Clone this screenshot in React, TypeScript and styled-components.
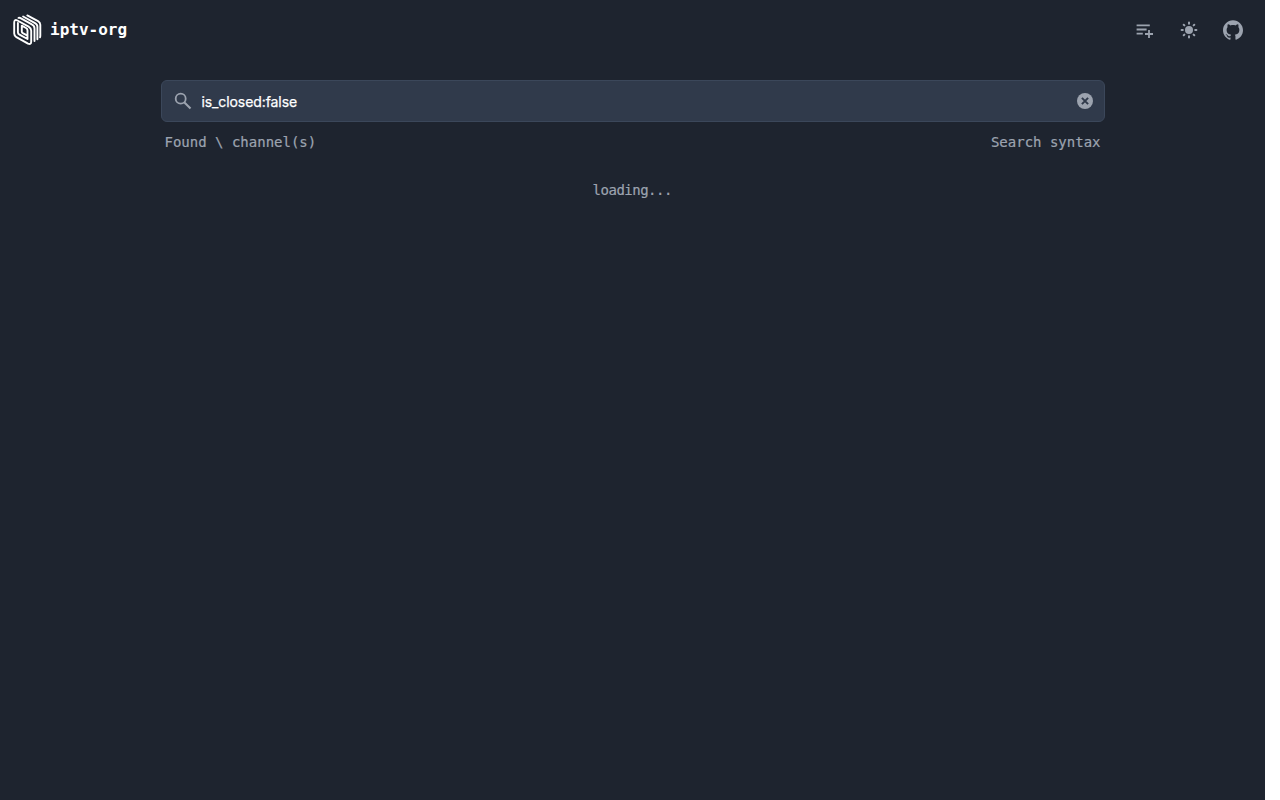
import React, { useState } from 'react';
import styled, { createGlobalStyle } from 'styled-components';

const GlobalStyle = createGlobalStyle`
  *, *::before, *::after { box-sizing: border-box; }
  html { background: #ffffff; }
  body { margin: 0; overflow: hidden; }
`;

const Page = styled.div`
  width: calc(100vw - 15px);
  min-height: 100vh;
  background: #1e242f;
  color: #9ca3af;
  font-family: 'DejaVu Sans Mono', monospace;
  font-size: 14px;
  line-height: 20px;
  -webkit-text-stroke: 0.2px currentColor;
`;

const NavBar = styled.header`
  display: flex;
  align-items: center;
  justify-content: space-between;
  height: 60px;
  padding: 0 12px;
`;

const Brand = styled.a`
  display: flex;
  align-items: center;
  gap: 8px;
  color: #ffffff;
  font-size: 16px;
  font-weight: 700;
  line-height: 24px;
  -webkit-text-stroke: 0;
`;

const Logo = styled.svg`
  width: 30px;
  height: 32px;
  fill: none;
  stroke: currentColor;
  stroke-width: 1.9;
  stroke-linecap: round;
  stroke-linejoin: round;
`;

const Actions = styled.nav`
  display: flex;
  gap: 4px;
`;

const IconButton = styled.button`
  display: flex;
  align-items: center;
  justify-content: center;
  width: 40px;
  height: 40px;
  padding: 0;
  border: 0;
  background: transparent;
  color: inherit;
`;

const Icon = styled.svg`
  flex: none;
  width: 20px;
  height: 20px;
  fill: currentColor;
`;

const LineIcon = styled(Icon)`
  fill: none;
  stroke: currentColor;
  stroke-width: 1.8;
`;

const Content = styled.main`
  width: 944px;
  margin: 0 160px 0 161px;
  padding-top: 20px;
`;

const SearchBox = styled.label`
  display: flex;
  align-items: center;
  height: 42px;
  padding: 0 9px 0 11px;
  border: 1px solid #3b475a;
  border-radius: 6px;
  background: #303a4b;
`;

const SearchInput = styled.input`
  flex: 1;
  min-width: 0;
  height: 40px;
  margin: 1px 0 0 8.4px;
  padding: 0;
  border: 0;
  outline: 0;
  background: transparent;
  color: #ffffff;
  font: 400 14px/20px Inter, 'Liberation Sans', sans-serif;
  letter-spacing: -0.08px;
  -webkit-text-stroke: 0.25px currentColor;
`;

const ClearButton = styled(IconButton)`
  width: 20px;
  height: 20px;
`;

const Summary = styled.div`
  display: flex;
  justify-content: space-between;
  padding: 10px 4.5px 0 3.5px;
`;

const Loading = styled.div`
  padding: 28px 1.5px 0 0;
  letter-spacing: -0.5px;
  text-align: center;
`;

export default function App() {
  const [query, setQuery] = useState('is_closed:false');

  return (
    <>
      <GlobalStyle />
      <Page>
        <NavBar>
          <Brand>
            <Logo viewBox="0 0 30 32">
              <path d="M2.2 8.7Q2.2 5 5.4 6.5L16.6 12.6Q19.2 14.2 19.2 16.8V27.5Q19.2 31 16 29.6L4.4 23.2Q2.2 21.8 2.2 19.5Z" />
              <path d="M5.9 9V18.2Q5.9 19.8 7.5 20.7L15.5 25V16.5Q15.5 14.8 14 14L9.8 11.7V17.4Q9.8 18.6 10.8 19.2L15 21.4" />
              <path d="M6.5 3.9Q7.7 3.6 9 4.3L19.8 10.4Q22.5 11.8 22.5 14.4V27" />
              <path d="M11.1 2.5L22.6 8.8Q25.4 10.3 25.4 12.6V25.3" />
              <path d="M15.3 1.4L26 7.1Q28.3 8.5 28.3 10.8V21.5Q28.3 22.8 28 23.3" />
            </Logo>
            iptv-org
          </Brand>
          <Actions>
            <IconButton aria-label="Create playlist">
              <LineIcon viewBox="0 0 20 20">
                <path d="M1.6 5.4H14.8M1.6 9.5H11.6M1.6 13.6H7.8M10 14H18M14 10V18" />
              </LineIcon>
            </IconButton>
            <IconButton aria-label="Toggle theme">
              <Icon viewBox="0 0 20 20">
                <circle cx="10" cy="10" r="4" />
                <path
                  d="M10 2.6V3.8M10 16.2V17.4M2.6 10H3.8M16.2 10H17.4M4.7 4.7L5.4 5.4M14.6 14.6L15.3 15.3M4.7 15.3L5.4 14.6M14.6 5.4L15.3 4.7"
                  stroke="currentColor"
                  strokeWidth="2"
                  strokeLinecap="round"
                />
              </Icon>
            </IconButton>
            <IconButton aria-label="GitHub">
              <Icon viewBox="0 0 24 24">
                <path d="M12 .297c-6.63 0-12 5.373-12 12 0 5.303 3.438 9.8 8.205 11.385.6.113.82-.258.82-.577 0-.285-.01-1.04-.015-2.04-3.338.724-4.042-1.61-4.042-1.61C4.422 18.07 3.633 17.7 3.633 17.7c-1.087-.744.084-.729.084-.729 1.205.084 1.838 1.236 1.838 1.236 1.07 1.835 2.809 1.305 3.495.998.108-.776.417-1.305.76-1.605-2.665-.3-5.466-1.332-5.466-5.93 0-1.31.465-2.38 1.235-3.22-.135-.303-.54-1.523.105-3.176 0 0 1.005-.322 3.3 1.23.96-.267 1.98-.399 3-.405 1.02.006 2.04.138 3 .405 2.28-1.552 3.285-1.23 3.285-1.23.645 1.653.24 2.873.12 3.176.765.84 1.23 1.91 1.23 3.22 0 4.61-2.805 5.625-5.475 5.92.42.36.81 1.096.81 2.22 0 1.606-.015 2.896-.015 3.286 0 .315.21.69.825.57C20.565 22.092 24 17.592 24 12.297c0-6.627-5.373-12-12-12" />
              </Icon>
            </IconButton>
          </Actions>
        </NavBar>
        <Content>
          <SearchBox>
            <LineIcon viewBox="0 0 20 20">
              <circle cx="7.7" cy="7.7" r="5" />
              <path d="M11.2 11.2L17.5 17.5" strokeWidth="2.1" />
            </LineIcon>
            <SearchInput value={query} onChange={(event) => setQuery(event.target.value)} />
            <ClearButton aria-label="Clear" onClick={() => setQuery('')}>
              <Icon viewBox="0 0 20 20">
                <circle cx="10" cy="10" r="8" />
                <path d="M6.9 6.9L13.1 13.1M13.1 6.9L6.9 13.1" stroke="#303a4b" strokeWidth="2" />
              </Icon>
            </ClearButton>
          </SearchBox>
          <Summary>
            <span>Found \ channel(s)</span>
            <span>Search syntax</span>
          </Summary>
          <Loading>loading...</Loading>
        </Content>
      </Page>
    </>
  );
}
